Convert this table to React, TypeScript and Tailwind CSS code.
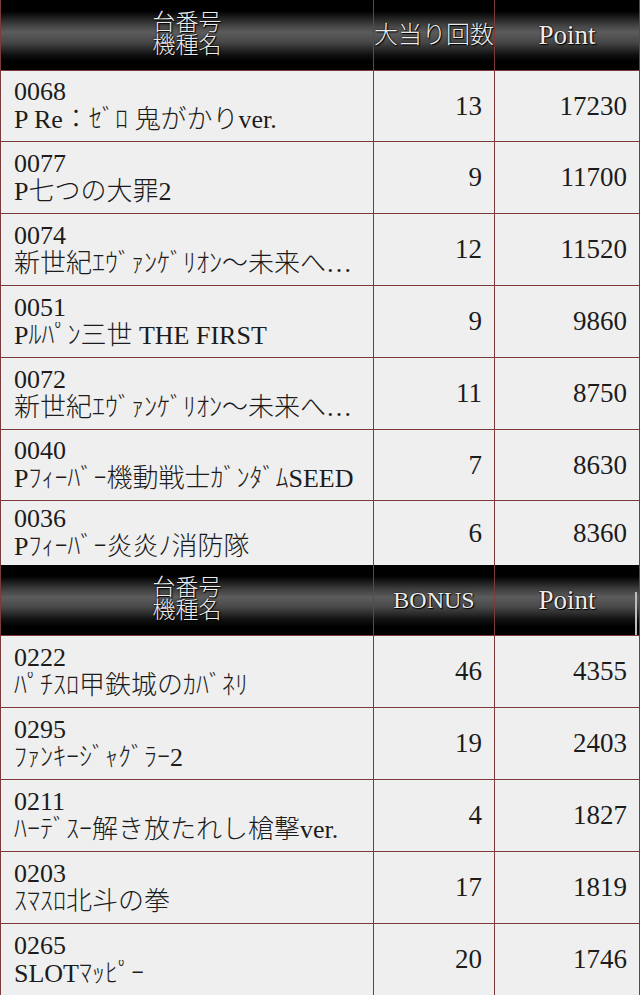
import React from "react";

type Row = { no: string; name: string; count: number; point: number; h: string };

const pachinko: Row[] = [
  { no: "0068", name: "P Re：ｾﾞﾛ 鬼がかりver.", count: 13, point: 17230, h: "h-[71px]" },
  { no: "0077", name: "P七つの大罪2", count: 9, point: 11700, h: "h-[72px]" },
  { no: "0074", name: "新世紀ｴｳﾞｧﾝｹﾞﾘｵﾝ～未来への咆哮～", count: 12, point: 11520, h: "h-[72px]" },
  { no: "0051", name: "Pﾙﾊﾟﾝ三世 THE FIRST", count: 9, point: 9860, h: "h-[72px]" },
  { no: "0072", name: "新世紀ｴｳﾞｧﾝｹﾞﾘｵﾝ～未来への咆哮～", count: 11, point: 8750, h: "h-[72px]" },
  { no: "0040", name: "Pﾌｨｰﾊﾞｰ機動戦士ｶﾞﾝﾀﾞﾑSEED", count: 7, point: 8630, h: "h-[71px]" },
  { no: "0036", name: "Pﾌｨｰﾊﾞｰ炎炎ﾉ消防隊", count: 6, point: 8360, h: "h-[65px]" },
];

const slot: Row[] = [
  { no: "0222", name: "ﾊﾟﾁｽﾛ甲鉄城のｶﾊﾞﾈﾘ", count: 46, point: 4355, h: "h-[72px]" },
  { no: "0295", name: "ﾌｧﾝｷｰｼﾞｬｸﾞﾗｰ2", count: 19, point: 2403, h: "h-[72px]" },
  { no: "0211", name: "ﾊｰﾃﾞｽｰ解き放たれし槍撃ver.", count: 4, point: 1827, h: "h-[72px]" },
  { no: "0203", name: "ｽﾏｽﾛ北斗の拳", count: 17, point: 1819, h: "h-[72px]" },
  { no: "0265", name: "SLOTﾏｯﾋﾟｰ", count: 20, point: 1746, h: "h-[72px]" },
];

const grid = "grid grid-cols-[373px_121px_1fr]";
const line = "border-[#7d3a3a]";

const Header = ({ label, scroll }: { label: string; scroll?: boolean }) => (
  <div
    className={`${grid} relative h-[70px] text-[#ececec] [text-shadow:0_0_2px_#000,1px_1px_1px_#000] bg-[linear-gradient(to_bottom,#000_0%,#000_16%,#3c3c3c_34%,#5c5c5c_46%,#484848_60%,#111_78%,#000_88%,#000_100%)]`}
  >
    <div className={`border-r ${line} flex flex-col items-center justify-center text-[23px] leading-[23px] pb-[2px]`}>
      <span>台番号</span>
      <span>機種名</span>
    </div>
    <div className={`border-r ${line} flex items-center justify-center text-[24px] leading-[30px] whitespace-nowrap`}>
      {label}
    </div>
    <div className="flex items-center justify-center text-[27px] leading-[30px]">Point</div>
    {scroll && <div className="absolute right-[2px] top-[27px] h-[43px] w-[2px] bg-[#bdbdbd]" />}
  </div>
);

const Body = ({ rows }: { rows: Row[] }) => (
  <>
    {rows.map((r) => (
      <div key={r.no} className={`${grid} ${r.h} border-t ${line} bg-[#efefef] text-[#1c1c1c]`}>
        <div className={`border-r ${line} flex flex-col justify-center min-w-0 pl-[13px] pr-[4px] text-[26px] leading-[28px]`}>
          <span>{r.no}</span>
          <span className="block whitespace-nowrap overflow-hidden text-ellipsis">{r.name}</span>
        </div>
        <div className={`border-r ${line} flex items-center justify-end pr-[12px] text-[27px]`}>{r.count}</div>
        <div className="flex items-center justify-end pr-[12px] text-[27px]">{r.point}</div>
      </div>
    ))}
  </>
);

export default function App() {
  return (
    <div
      className={`w-[640px] h-[995px] overflow-hidden border-l border-r ${line} bg-[#efefef] font-light`}
      style={{ fontFamily: '"Liberation Serif", "Noto Sans CJK JP", serif' }}
    >
      <Header label="大当り回数" />
      <Body rows={pachinko} />
      <Header label="BONUS" scroll />
      <Body rows={slot} />
    </div>
  );
}
